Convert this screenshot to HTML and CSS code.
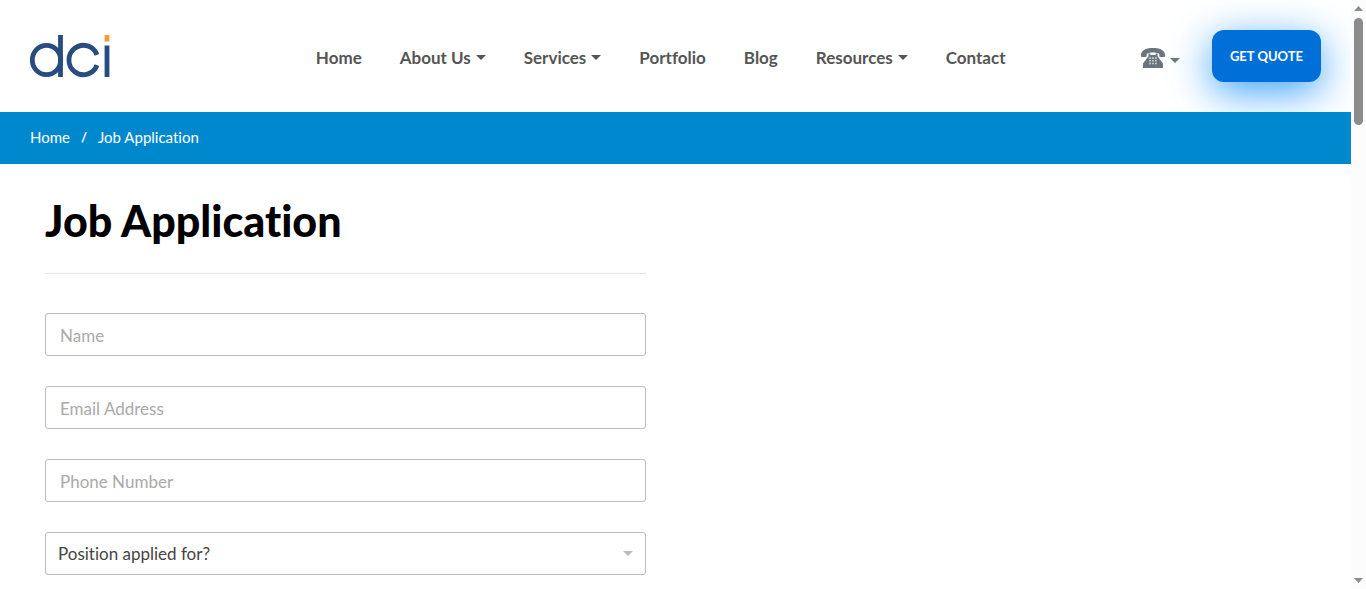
FILE: index.html
```html
<!DOCTYPE html>
<html lang="en">
<head>
<meta charset="utf-8">
<meta name="viewport" content="width=device-width, initial-scale=1">
<title>Job Application</title>
<link rel="stylesheet" href="styles.css">
</head>
<body>
<div class="page">
  <header class="header">
    <a class="logo" href="#" aria-label="dci home">
      <svg width="80" height="44" viewBox="0 0 80 44" fill="none" stroke="#284c80" stroke-width="4.800">
        <path d="M30.500 1v42"/>
        <ellipse cx="16.500" cy="26" rx="14.200" ry="14.700"/>
        <path d="M67 20.800a14.500 14.700 0 1 0 0 10.400"/>
        <path d="M77 11.500v31.500"/>
        <path d="M77 1v6.500" stroke="#f79a34"/>
      </svg>
    </a>
    <nav class="nav" aria-label="Main">
      <a class="nav-link" href="#">Home</a>
      <a class="nav-link has-menu" href="#">About Us</a>
      <a class="nav-link has-menu" href="#">Services</a>
      <a class="nav-link" href="#">Portfolio</a>
      <a class="nav-link" href="#">Blog</a>
      <a class="nav-link has-menu" href="#">Resources</a>
      <a class="nav-link" href="#">Contact</a>
    </nav>
    <div class="actions">
      <button class="phone has-menu" type="button" aria-label="Call us">
        <svg width="24" height="20" viewBox="0 0 24 20" fill="#6c757d">
          <path d="M0 7.500C0 2.500 4 0 12 0s12 2.500 12 7.500V8q0 1-1 1h-3.500q-1.200 0-1.200-1.200V6C16.500 4 7.500 4 5.700 6v1.800Q5.700 9 4.500 9H1Q0 9 0 8Z"/>
          <path d="M7.500 5.500h1.800V7h5.400V5.500h1.800v2.700l5.500 7.300V20H2v-4.500l5.500-7.300Z"/>
          <path fill="#d4d7da" d="M8.300 9.300h1.600v1.600H8.300Zm2.900 0h1.600v1.600h-1.600Zm2.900 0h1.600v1.600h-1.600ZM8.300 12h1.600v1.600H8.300Zm2.900 0h1.600v1.600h-1.600Zm2.900 0h1.600v1.600h-1.600ZM8.300 14.700h1.600v1.600H8.300Zm2.900 0h1.600v1.600h-1.600Zm2.900 0h1.600v1.600h-1.600Z"/>
        </svg>
      </button>
      <a class="quote" href="#">GET QUOTE</a>
    </div>
  </header>
  <nav class="crumbs" aria-label="Breadcrumb">
    <a href="#">Home</a>
    <span class="slash">/</span>
    <a href="#" aria-current="page">Job Application</a>
  </nav>
  <main class="main">
    <form class="form">
      <h1 class="title">Job Application</h1>
      <input class="field" type="text" placeholder="Name" aria-label="Name">
      <input class="field" type="email" placeholder="Email Address" aria-label="Email Address">
      <input class="field" type="tel" placeholder="Phone Number" aria-label="Phone Number">
      <div class="select-wrap">
        <select class="field select" aria-label="Position applied for?">
          <option>Position applied for?</option>
        </select>
      </div>
    </form>
  </main>
</div>
<div class="scrollbar" aria-hidden="true">
  <svg class="arrow" width="9" height="5" viewBox="0 0 9 5"><path d="M0 5 4.500 0 9 5Z"/></svg>
  <div class="thumb"></div>
  <svg class="arrow arrow-down" width="9" height="5" viewBox="0 0 9 5"><path d="M0 0 4.500 5 9 0Z"/></svg>
</div>
</body>
</html>
```

FILE: styles.css
```css
* { box-sizing: border-box; }

body {
  margin: 0;
  min-height: 100vh;
  display: flex;
  background: #fff;
  color: #555;
  font-family: Lato, "Noto Sans", sans-serif;
  font-size: 17px;
  font-variant-ligatures: none;
}

a { color: inherit; text-decoration: none; }

.page {
  flex: 1;
  min-width: 0;
  overflow: hidden;
}

.header {
  display: grid;
  grid-template-columns: 9fr auto 10fr;
  align-items: center;
  padding: 30px;
}

.logo { display: block; height: 44px; }
.logo svg { display: block; }

.nav { display: flex; padding-top: 3px; }

.nav-link {
  padding: 0 19px;
  line-height: 24px;
  font-weight: 700;
  white-space: nowrap;
}

.has-menu::after {
  content: "";
  display: inline-block;
  margin-left: 5px;
  border: 5px solid transparent;
  border-top-color: currentColor;
  border-bottom: 0;
  vertical-align: 4px;
}

.actions {
  display: flex;
  justify-content: flex-end;
  align-items: center;
  gap: 32px;
}

.phone {
  display: flex;
  align-items: center;
  padding: 4px 0 0;
  border: 0;
  background: none;
  color: #6c757d;
}
.phone::after { margin-top: 4px; }

.quote {
  padding: 0 18px;
  border-radius: 12px;
  background: #0070d8;
  box-shadow: 0 10px 40px #3ca2ff;
  color: #fff;
  font-size: 13px;
  font-weight: 700;
  line-height: 52px;
  white-space: nowrap;
}

.crumbs {
  position: relative;
  display: flex;
  gap: 11px;
  padding: 13px 30px 15px;
  background: #0088cf;
  color: #fff;
  font-size: 15px;
  line-height: 24px;
}
.slash { font-size: 13px; font-weight: 700; }

.main {
  display: grid;
  grid-template-columns: 1fr 1fr;
  padding: 27px 30px 14px;
}

.form {
  display: grid;
  gap: 30px;
  padding: 0 30px 0 15px;
}

.title {
  margin: 0 0 9px;
  padding-bottom: 22px;
  border-bottom: 1px solid #e6e6e6;
  color: #000;
  font-size: 43px;
  line-height: 60px;
  font-weight: 900;
}

.field {
  display: block;
  width: 100%;
  height: 43px;
  padding: 1px 14px 0;
  border: 1px solid #bbb;
  border-radius: 3px;
  background: #fff;
  color: #444;
  font: inherit;
}
.field::placeholder { color: #aaa; opacity: 1; }

.select-wrap { position: relative; }
.select-wrap::after {
  content: "";
  position: absolute;
  top: 19px;
  right: 13px;
  border: 5px solid transparent;
  border-top-color: #bbb;
  border-bottom: 0;
  pointer-events: none;
}
.select { appearance: none; padding: 0 12px 1px; }

.scrollbar {
  display: flex;
  flex-direction: column;
  align-items: center;
  width: 15px;
  padding: 6px 0;
  background: #fcfcfc;
}
.thumb {
  width: 9px;
  height: 107px;
  margin-top: 7px;
  border-radius: 5px;
  background: #8b8b8b;
}
.arrow { fill: #8b8b8b; }
.arrow-down { margin-top: auto; }
```
